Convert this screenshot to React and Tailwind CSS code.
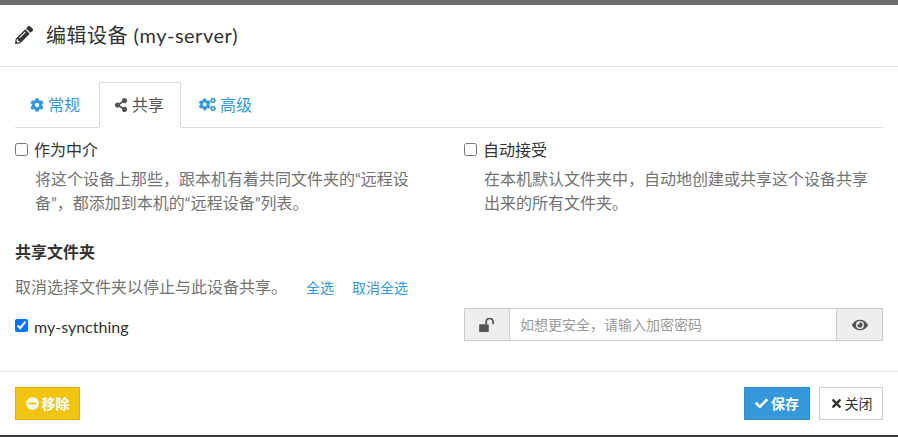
import { FaPencilAlt, FaCog, FaShareAlt, FaCogs, FaEye, FaCheck, FaTimes, FaMinusCircle } from "react-icons/fa";

const font = "font-['Lato','Noto_Sans_CJK_SC',sans-serif]";

// open padlock, shackle swung out to the right
function UnlockIcon() {
  return (
    <svg viewBox="0 0 18 16" className="w-[16px] h-[14px] text-[#555]" fill="currentColor">
      <rect x="0" y="7" width="11" height="9" rx="1" />
      <path d="M8 7V4.5a4 4 0 0 1 8 0V7" fill="none" stroke="currentColor" strokeWidth="2" />
    </svg>
  );
}

export default function App() {
  return (
    <div className={`h-[437px] w-[898px] overflow-hidden bg-[#6b6b6b] ${font} text-[16px] text-[#333]`}>
      <div className="mt-[5px] h-[430px] bg-white flex flex-col">
        {/* Header */}
        <div className="h-[62px] shrink-0 border-b border-[#e5e5e5] px-[15px] pb-[2px] flex items-center">
          <FaPencilAlt className="text-[18px] text-[#333] mr-[13px]" />
          <h4 className="text-[20px] text-[#333] tracking-[0.5px]">编辑设备 (my-server)</h4>
        </div>

        {/* Body */}
        <div className="flex-1 px-[15px] pt-[15px]">
          <div className="flex h-[46px] border-b border-[#ddd]">
            <a className="flex items-center gap-[4px] pl-[15px] pr-[19px] text-[#3498db]">
              <FaCog className="text-[14px]" />常规
            </a>
            <a className="flex items-center gap-[4px] pl-[14px] w-[82px] h-[46px] border border-[#ddd] border-b-white bg-white text-[#555]">
              <FaShareAlt className="text-[14px]" />共享
            </a>
            <a className="flex items-center gap-[4px] px-[18px] text-[#3498db]">
              <FaCogs className="text-[17px]" />高级
            </a>
          </div>

          <div className="grid grid-cols-[449px_1fr] mt-[11px]">
            <div>
              <label className="flex items-center gap-[6px] h-[20px]">
                <input type="checkbox" className="w-[13px] h-[13px] m-0" />
                <span className="pt-[2px]">作为中介</span>
              </label>
              <p className="pl-[20px] pr-[49px] mt-[8px] leading-[24px] text-[#737373]">
                将这个设备上那些，跟本机有着共同文件夹的“远程设备”，都添加到本机的“远程设备”列表。
              </p>
            </div>
            <div>
              <label className="flex items-center gap-[6px] h-[20px]">
                <input type="checkbox" className="w-[13px] h-[13px] m-0" />
                <span className="pt-[2px]">自动接受</span>
              </label>
              <p className="pl-[20px] pr-[9px] mt-[8px] leading-[24px] text-[#737373]">
                在本机默认文件夹中，自动地创建或共享这个设备共享出来的所有文件夹。
              </p>
            </div>
          </div>

          <h5 className="mt-[26px] text-[16px] font-bold text-[#333] leading-[22px]">共享文件夹</h5>
          <div className="mt-[13px] flex items-center h-[22px] text-[#737373]">
            <span>取消选择文件夹以停止与此设备共享。</span>
            <a className="ml-[19px] text-[14px] text-[#3498db]">全选</a>
            <a className="ml-[18px] text-[14px] text-[#3498db]">取消全选</a>
          </div>

          <div className="grid grid-cols-[449px_1fr] mt-[10px]">
            <label className="flex items-center gap-[6px] h-[33px] pt-[2px]">
              <input type="checkbox" defaultChecked className="w-[13px] h-[13px] m-0 accent-[#0075ff]" />
              <span className="pt-[2px]">my-syncthing</span>
            </label>
            <div className="flex h-[33px] border border-[#ccc]">
              <span className="w-[45px] shrink-0 bg-[#eee] border-r border-[#ccc] flex items-center justify-center">
                <UnlockIcon />
              </span>
              <input
                placeholder="如想更安全，请输入加密密码"
                className="flex-1 min-w-0 px-[10px] text-[14px] outline-none placeholder:text-[#999]"
              />
              <span className="w-[46px] shrink-0 bg-[#eee] border-l border-[#ccc] flex items-center justify-center">
                <FaEye className="text-[16px] text-[#555]" />
              </span>
            </div>
          </div>
        </div>

        {/* Footer */}
        <div className="h-[64px] shrink-0 border-t border-[#e5e5e5] px-[15px] flex items-center justify-between">
          <button className="h-[33px] w-[65px] bg-[#f1c40f] border border-[#dab10d] text-white font-bold text-[14px] flex items-center justify-center gap-[3px]">
            <FaMinusCircle className="text-[13px]" />移除
          </button>
          <div className="flex gap-[9px]">
            <button className="h-[33px] w-[66px] bg-[#3498db] border border-[#2e8ece] text-white font-bold text-[14px] flex items-center justify-center gap-[3px]">
              <FaCheck className="text-[13px]" />保存
            </button>
            <button className="h-[33px] w-[64px] bg-white border border-[#ccc] text-[#333] text-[14px] flex items-center justify-center gap-[2px]">
              <FaTimes className="text-[13px]" />关闭
            </button>
          </div>
        </div>
      </div>
      <div className="h-[2px] bg-[#3a3a3a]" />
    </div>
  );
}
